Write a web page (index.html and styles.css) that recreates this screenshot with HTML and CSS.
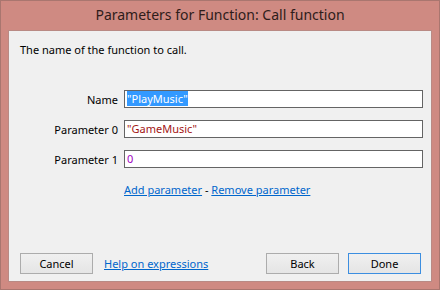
FILE: index.html
```html
<!DOCTYPE html>
<html lang="en">
<head>
    <meta charset="UTF-8">
    <title>Parameters for Function: Call function</title>
    <link rel="stylesheet" href="styles.css">
</head>
<body>
    <div class="window">
        <div class="title">Parameters for Function: Call function</div>
        <div class="client">
            <p class="description">The name of the function to call.</p>
            <div class="params">
                <label class="param-label">Name</label>
                <div class="param-input"><span class="selected">"PlayMusic"</span></div>
                <label class="param-label">Parameter 0</label>
                <div class="param-input string">"GameMusic"</div>
                <label class="param-label">Parameter 1</label>
                <div class="param-input number">0</div>
                <div></div>
                <div class="param-links">
                    <a href="#">Add parameter</a> - <a href="#">Remove parameter</a>
                </div>
            </div>
            <div class="footer">
                <button class="btn">Cancel</button>
                <a href="#" class="help">Help on expressions</a>
                <span class="spacer"></span>
                <button class="btn">Back</button>
                <button class="btn default">Done</button>
            </div>
        </div>
    </div>
</body>
</html>
```

FILE: styles.css
```css
html, body {
    margin: 0;
    padding: 0;
}
body {
    font-family: "Noto Sans", "Liberation Sans", sans-serif;
    font-size: 11px;
    color: #000;
}
.window {
    box-sizing: border-box;
    width: 440px;
    height: 290px;
    background-color: #cf8a82;
    border: 1px solid #a9766f;
    display: flex;
    flex-direction: column;
}
.title {
    height: 29px;
    line-height: 28px;
    text-align: center;
    font-size: 14px;
    color: #2e1c1a;
}
.client {
    box-sizing: border-box;
    margin: 0 7px 7px 7px;
    height: 252px;
    background-color: #f0f0f0;
    border: 1px solid #b98a84;
    display: flex;
    flex-direction: column;
    padding: 11px 10px 7px 11px;
}
.description {
    margin: 0;
    line-height: 16px;
}
.params {
    display: grid;
    grid-template-columns: 98px 299px;
    column-gap: 6px;
    row-gap: 12px;
    margin-top: 32px;
    align-items: center;
}
.param-label {
    text-align: right;
}
.param-input {
    box-sizing: border-box;
    height: 18px;
    border: 1px solid #646464;
    background-color: #fff;
    padding: 0 2px;
    line-height: 16px;
    white-space: nowrap;
}
.selected {
    background-color: #3399ff;
    color: #fff;
}
.string {
    color: #a31515;
}
.number {
    color: #a000c0;
}
.param-links {
    margin-top: 2px;
}
a {
    color: #0066cc;
    text-decoration: underline;
}
.footer {
    margin-top: auto;
    display: flex;
    align-items: center;
}
.spacer {
    flex: 1;
}
.btn {
    box-sizing: border-box;
    width: 73px;
    height: 21px;
    font-family: inherit;
    font-size: 11px;
    color: #000;
    background: linear-gradient(#f0f0f0, #e5e5e5);
    border: 1px solid #acacac;
    padding: 0;
}
.btn + .btn {
    margin-left: 9px;
}
.btn.default {
    border-color: #3c8ee0;
}
.help {
    margin-left: 11px;
}
```
